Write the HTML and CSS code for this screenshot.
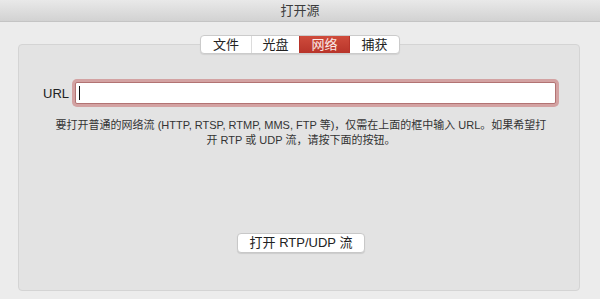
FILE: index.html
```html
<!DOCTYPE html>
<html lang="zh-CN">
<head>
  <meta charset="UTF-8">
  <title>打开源</title>
  <link rel="stylesheet" href="styles.css">
</head>
<body>
  <div class="window">
    <div class="titlebar">打开源</div>

    <div class="content">
      <div class="tabs">
        <span class="tab">文件</span>
        <span class="tab">光盘</span>
        <span class="tab active">网络</span>
        <span class="tab">捕获</span>
      </div>

      <div class="panel">
        <div class="url-row">
          <label class="url-label">URL</label>
          <div class="url-input"><span class="caret"></span></div>
        </div>

        <p class="hint">要打开普通的网络流 (HTTP, RTSP, RTMP, MMS, FTP 等)，仅需在上面的框中输入 URL。如果希望打<br>开 RTP 或 UDP 流，请按下面的按钮。</p>

        <div class="action">
          <button class="rtp-btn">打开 RTP/UDP 流</button>
        </div>
      </div>
    </div>
  </div>
</body>
</html>
```

FILE: styles.css
```css
:root {
  --window-bg: #ececec;
  --panel-bg: #e3e3e3;
  --panel-border: #d4d4d4;
  --text-color: #222;
  --accent: #c23d2f;
  --ring: #c98a8a;
}

html, body {
  margin: 0;
  padding: 0;
}

body {
  font-family: "Liberation Sans", "Noto Sans CJK SC", sans-serif;
  color: var(--text-color);
  background: var(--window-bg);
  width: 600px;
  height: 299px;
  overflow: hidden;
}

.window {
  height: 299px;
  display: flex;
  flex-direction: column;
}

.titlebar {
  height: 22px;
  line-height: 22px;
  text-align: center;
  font-size: 13px;
  color: #3c3c3c;
  background: linear-gradient(#e9e9e9, #d2d2d2);
  border-bottom: 1px solid #c4c4c4;
  box-sizing: border-box;
}

.content {
  flex: 1;
  display: flex;
  flex-direction: column;
  padding: 13px 20px 8px 18px;
}

.tabs {
  align-self: center;
  display: flex;
  height: 19px;
  margin-left: 2px;
  margin-bottom: -10px;
  position: relative;
  z-index: 1;
  background: #fff;
  border: 1px solid #cbcbcb;
  border-radius: 4px;
  box-shadow: 0 1px 1px rgba(0, 0, 0, 0.08);
  overflow: hidden;
  box-sizing: border-box;
}

.tab {
  width: 50px;
  font-size: 13px;
  line-height: 17px;
  text-align: center;
  border-left: 1px solid #dcdcdc;
  box-sizing: border-box;
}

.tab:first-child {
  border-left: none;
}

.tab:nth-child(2) {
  width: 48px;
}

.tab.active {
  background: linear-gradient(#cf4c3c, #b8342a);
  color: #fbe9e6;
  border-left-color: #b8342a;
}

.tab.active + .tab {
  border-left-color: #b8342a;
}

.panel {
  flex: 1;
  background: var(--panel-bg);
  border: 1px solid var(--panel-border);
  border-radius: 4px;
  display: flex;
  flex-direction: column;
  padding: 34px 20px 0 24px;
}

.url-row {
  display: flex;
  align-items: center;
  gap: 3px;
}

.url-label {
  font-size: 13px;
}

.url-input {
  flex: 1;
  height: 20px;
  margin: 3px;
  background: #fff;
  border: 1px solid #b27373;
  box-shadow: 0 0 0 3px rgba(205, 140, 140, 0.75);
  border-radius: 2px;
  display: flex;
  align-items: center;
  padding-left: 3px;
}

.caret {
  width: 1px;
  height: 14px;
  background: #111;
}

.hint {
  margin: 11px auto 0;
  text-align: center;
  white-space: nowrap;
  font-size: 11px;
  line-height: 15px;
  color: #333;
}

.action {
  margin-top: auto;
  margin-bottom: 37px;
  display: flex;
  justify-content: center;
}

.rtp-btn {
  font-family: "Liberation Sans", "Noto Sans CJK SC", sans-serif;
  font-size: 13px;
  color: var(--text-color);
  background: #fff;
  border: 1px solid #c8c8c8;
  border-radius: 4px;
  box-shadow: 0 1px 1px rgba(0, 0, 0, 0.1);
  width: 128px;
  height: 20px;
  padding: 0;
  line-height: 18px;
}
```
